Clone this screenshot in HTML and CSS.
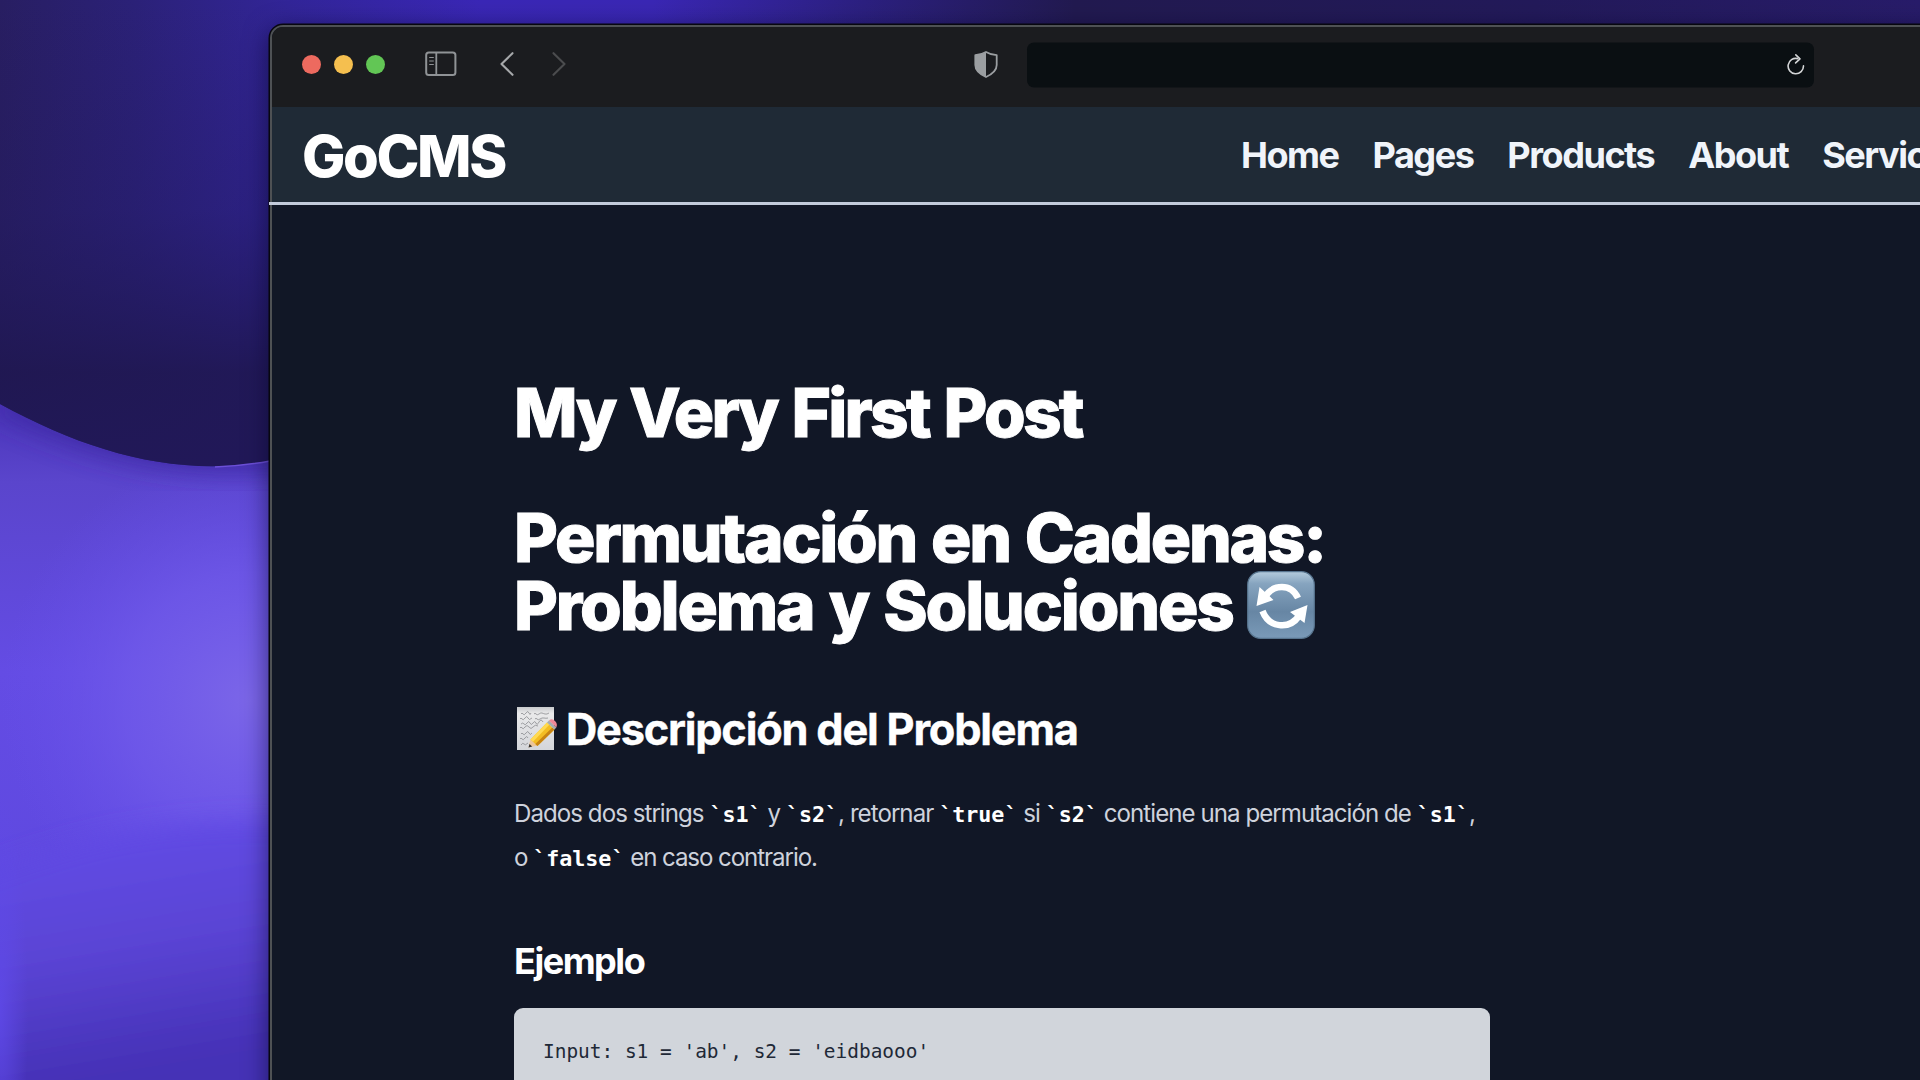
FILE: index.html
```html
<!DOCTYPE html>
<html lang="es">
<head>
<meta charset="utf-8">
<title>GoCMS</title>
<link rel="stylesheet" href="styles.css">
</head>
<body>
<div class="desktop">
  <svg class="wallpaper" viewBox="0 0 1920 1080" aria-hidden="true">
    <defs>
      <linearGradient id="base" x1="0" y1="400" x2="0" y2="1080" gradientUnits="userSpaceOnUse">
        <stop offset="0" stop-color="#4a34b8"/><stop offset=".12" stop-color="#5a45cc"/><stop offset=".4" stop-color="#644ce4"/><stop offset=".68" stop-color="#5f49e0"/><stop offset="1" stop-color="#4330b4"/>
      </linearGradient>
      <radialGradient id="glow" cx="250" cy="700" r="250" gradientUnits="userSpaceOnUse">
        <stop offset="0" stop-color="#7b66e8"/><stop offset=".5" stop-color="#705aea" stop-opacity=".75"/><stop offset="1" stop-color="#6650ea" stop-opacity="0"/>
      </radialGradient>
      <linearGradient id="fold" x1="150" y1="820" x2="190" y2="1060" gradientUnits="userSpaceOnUse">
        <stop offset="0" stop-color="#614be6"/><stop offset=".5" stop-color="#5a44d4"/><stop offset="1" stop-color="#4531b6"/>
      </linearGradient>
      <radialGradient id="leftEdge" gradientTransform="translate(0 1010) scale(28 220)" cx="0" cy="0" r="1" gradientUnits="userSpaceOnUse">
        <stop offset="0" stop-color="#5f4aea" stop-opacity=".8"/><stop offset="1" stop-color="#5f4aea" stop-opacity="0"/>
      </radialGradient>
      <linearGradient id="discX" x1="0" y1="0" x2="1920" y2="0" gradientUnits="userSpaceOnUse">
        <stop offset="0" stop-color="#281e62"/><stop offset=".07" stop-color="#2b2178"/><stop offset=".15" stop-color="#322598"/><stop offset=".25" stop-color="#3a27b6"/><stop offset=".34" stop-color="#3a27b4"/><stop offset=".45" stop-color="#2c2080"/><stop offset=".56" stop-color="#221a50"/><stop offset=".8" stop-color="#231a5a"/><stop offset="1" stop-color="#281c6a"/>
      </linearGradient>
      <linearGradient id="discY" x1="0" y1="0" x2="0" y2="466" gradientUnits="userSpaceOnUse">
        <stop offset="0" stop-color="#20174f" stop-opacity="0"/><stop offset=".45" stop-color="#20185c" stop-opacity=".3"/><stop offset=".8" stop-color="#1f1750" stop-opacity=".88"/><stop offset="1" stop-color="#211858"/>
      </linearGradient>
      <filter id="soft" x="-20%" y="-20%" width="140%" height="140%"><feGaussianBlur stdDeviation="12"/></filter>
    </defs>
    <rect width="1920" height="1080" fill="url(#base)"/>
    <rect width="600" height="1080" fill="url(#glow)"/>
    <path d="M-60 890C50 850 130 815 330 822V1120H-60Z" fill="url(#fold)" filter="url(#soft)"/>
    <rect y="780" width="40" height="300" fill="url(#leftEdge)"/>
    <path d="M-10 412C90 460 180 484 290 472V400H-10Z" fill="#3a28a0" opacity=".7" filter="url(#soft)"/>
    <path d="M0 404C88 452 176 478 270 461H1920V0H0Z" fill="url(#discX)"/>
    <path d="M0 404C88 452 176 478 270 461H1920V0H0Z" fill="url(#discY)"/>
    <path d="M215 467Q243 466 270 461" fill="none" stroke="#6c50d8" stroke-width="1.5"/>
  </svg>

  <main class="window">
    <header class="toolbar">
      <div class="lights"><i class="light red"></i><i class="light yellow"></i><i class="light green"></i></div>
      <svg class="sidebar-icon" viewBox="0 0 32 26"><rect x="1.2" y="1.5" width="29.2" height="22.6" rx="2.6" fill="none" stroke="#909396" stroke-width="2"/><path d="M11.3 1.5v22.6" stroke="#909396" stroke-width="1.8"/><path d="M4.2 6.5h4.6M4.2 10h4.6M4.2 13.5h4.6" stroke="#909396" stroke-width="1.2"/></svg>
      <svg class="back-icon" viewBox="0 0 14 24"><path d="M12.5 1.2 1.5 12l11 10.8" fill="none" stroke="#a6a8aa" stroke-width="2.1" stroke-linecap="round" stroke-linejoin="round"/></svg>
      <svg class="forward-icon" viewBox="0 0 14 24"><path d="M1.5 1.2 12.5 12l-11 10.8" fill="none" stroke="#4b4c4e" stroke-width="2.1" stroke-linecap="round" stroke-linejoin="round"/></svg>
      <svg class="shield-icon" viewBox="0 0 24 28"><path d="M12 1.4C9 3.2 5.5 4.3 1.3 4.7V14.5C1.3 20 5.5 23.5 12 26.5 18.5 23.5 22.7 20 22.7 14.5V4.7C18.5 4.3 15 3.2 12 1.4Z" fill="none" stroke="#9b9ea1" stroke-width="1.8" stroke-linejoin="round"/><path d="M12 1.4C9 3.2 5.5 4.3 1.3 4.7V14.5C1.3 20 5.5 23.5 12 26.5Z" fill="#9b9ea1"/></svg>
      <div class="address">
        <svg class="reload-icon" viewBox="0 0 18 22"><path d="M10.6 5.1A7.7 7.7 0 1 0 16.5 12.4" fill="none" stroke="#d3d5d6" stroke-width="1.6" stroke-linecap="round"/><path d="M8.8 1.3 13 5.3 8.6 9.4" fill="none" stroke="#d3d5d6" stroke-width="1.6" stroke-linecap="round" stroke-linejoin="round"/></svg>
      </div>
    </header>
    <nav class="navbar">
      <a class="brand">GoCMS</a>
      <div class="links"><a>Home</a><a>Pages</a><a>Products</a><a>About</a><a>Services</a></div>
    </nav>
    <article class="post">
      <h1 class="title">My Very First Post</h1>
      <h1 class="heading"><span class="line-a">Permutación en Cadenas:</span><br><span class="line-b">Problema y Soluciones</span><svg class="cycle-emoji" viewBox="0 0 68 68"><defs><linearGradient id="tile" x1="0" y1="0" x2="0" y2="1"><stop offset="0" stop-color="#b4cbdc"/><stop offset=".18" stop-color="#86a4bf"/><stop offset=".6" stop-color="#6786a4"/><stop offset="1" stop-color="#7a9ab8"/></linearGradient></defs><rect x=".7" y=".7" width="66.6" height="66.6" rx="13" fill="url(#tile)" stroke="#58758f" stroke-width="1.2"/><g fill="none" stroke="#fff" stroke-width="6.5"><path d="M18 26C26 13 44 12 51 27"/><path d="M15.5 40C22 57 42 59 52 45"/></g><path d="M12.5 16 9.5 35 26.5 29ZM43 41 60.5 34 57.5 52Z" fill="#fff"/></svg></h1>
      <h2 class="subheading"><svg class="memo-emoji" viewBox="0 0 42 46"><defs><linearGradient id="paper" x1="0" y1="0" x2="0" y2="1"><stop offset="0" stop-color="#c8cacc"/><stop offset=".15" stop-color="#e9e9ea"/><stop offset="1" stop-color="#d4d6da"/></linearGradient></defs><path d="M1 1H38V44H1Z" fill="url(#paper)"/><g fill="none" stroke="#8b8d90" stroke-width=".8"><path d="M5 8q1-2 2 0t3-1 3 0 2 0M18 8q1-1.5 2 0t3 0 3-1 3 1 4-1"/><path d="M4 13q1-2 2 0t3-1 3 0 4 0M19 13q1-1.5 2 0t3 0 4-1 4 0"/><path d="M5 18q2-2 3 0t3-1 3 0 3 0 3 0 3-1 4 0"/><path d="M4 22q1-2 2 0t3-1 4 0 4 0 5-1"/><path d="M5 28q1-2 2 0t3-1 3 0 3 0"/><path d="M4 33q1-2 2 0t3-1 3 0M5 39q2-3 3-1t4-1"/></g><path d="M12.5 41.5 14.5 33 21.5 39.5Z" fill="#ecc59a"/><path d="M12.5 41.5 13.5 38 16.2 40.5Z" fill="#333"/><path d="M14.5 33.5 31 16.5 38.5 23.5 21.5 40Z" fill="#f3bd22"/><path d="M14.5 33.5 31 16.5 33.3 18.7 17 35.7Z" fill="#ffda51"/><path d="M19.3 38 36.3 21.4 38.5 23.5 21.5 40Z" fill="#c88412"/><path d="M31 16.5 33 14.5 40.3 21.5 38.5 23.5Z" fill="#a7acb0"/><path d="M33 14.5Q36 12 39 15T40.3 21.5Z" fill="#ee8796"/></svg><span>Descripción del Problema</span></h2>
      <p class="text">Dados dos strings <code>`s1`</code> y <code>`s2`</code>, retornar <code>`true`</code> si <code>`s2`</code> contiene una permutación de <code>`s1`</code>,<br><span class="line-end">o <code>`false`</code> en caso contrario.</span></p>
      <h3 class="example">Ejemplo</h3>
      <pre class="code-block">Input: s1 = 'ab', s2 = 'eidbaooo'</pre>
    </article>
  </main>
</div>
</body>
</html>
```

FILE: styles.css
```css
* { box-sizing: border-box; }
html, body { margin: 0; height: 100%; overflow: hidden; background: #22195c; }
.desktop {
  position: relative;
  width: 1920px;
  height: 1080px;
  padding: 25px 0 0 270px;
  overflow: hidden;
  font-family: Inter, "Liberation Sans", sans-serif;
}
/* full-screen artwork behind the window */
.wallpaper { position: absolute; inset: 0; width: 1920px; height: 1080px; }
.window {
  position: relative;
  width: 1900px;
  height: 1200px;
  border: 2px solid #4e5154;
  border-radius: 13px;
  background: #111726;
  box-shadow: 0 0 0 1.5px #07070f, 0 6px 26px rgba(8, 4, 40, .65);
}
.toolbar {
  display: flex;
  align-items: center;
  height: 80px;
  padding: 0 0 6px 30px;
  border-radius: 11px 11px 0 0;
  background: #1b1c1f;
}
.toolbar svg { display: block; flex: none; }
.lights { display: flex; gap: 12.8px; }
.light { width: 19px; height: 19px; border-radius: 50%; }
.red { background: #ed6a5f; }
.yellow { background: #f5bf4f; }
.green { background: #62c655; }
.sidebar-icon { width: 32px; height: 26px; margin-left: 40.4px; }
.back-icon { width: 14px; height: 24px; margin-left: 43.4px; }
.forward-icon { width: 14px; height: 24px; margin-left: 38px; }
.shield-icon { width: 24px; height: 28px; margin-left: 408px; }
.address {
  display: flex;
  justify-content: flex-end;
  align-items: center;
  width: 787px;
  height: 45px;
  margin-left: 29px;
  padding-right: 9.5px;
  border-radius: 7px;
  background: #0a0f12;
}
.address, .shield-icon { transform: translateY(.5px); }
.reload-icon { width: 18px; height: 22px; }
.navbar {
  display: flex;
  align-items: center;
  height: 98px;
  margin-left: -3px;
  padding: 1px 0 0 33px;
  border-bottom: 3px solid #c3cbdb;
  background: linear-gradient(90deg, #07070f 1px, #4e5154 1px 3px, #1f2a36 3px);
  color: #fff;
}
.brand { width: 939px; padding-top: 1px; font-size: 57.8px; font-weight: 800; letter-spacing: -2.4px; }
.links { display: flex; gap: 34px; font-size: 36.1px; font-weight: 700; letter-spacing: -1.5px; color: #f0f4fa; }
.post { width: 976px; margin-left: 242px; padding-top: 174px; color: #fff; }
.post h1, .post h2, .post h3 { margin: 0; white-space: nowrap; }
.post h1 {
  font-size: 67.4px;
  line-height: 67.4px;
  font-weight: 800;
  letter-spacing: -2.75px;
  word-spacing: 2.5px;
  -webkit-text-stroke: 1px #fff;
}
.post .heading { margin-top: 58px; }
.heading .line-a { letter-spacing: -2.27px; }
.heading .line-b { letter-spacing: -2.15px; }
.cycle-emoji { width: 68px; height: 68px; margin: -10px 0 -10px 14px; vertical-align: 1px; }
.post .subheading {
  display: flex;
  align-items: center;
  height: 48px;
  margin-top: 66px;
  font-size: 43.3px;
  font-weight: 700;
  letter-spacing: -1.2px;
  -webkit-text-stroke: .4px #fff;
}
.memo-emoji { width: 42px; height: 46px; margin: 0 8px 0 2px; }
.text { margin: 39px 0 0; font-size: 24.1px; line-height: 43.3px; letter-spacing: -.96px; color: #ced2dc; white-space: nowrap; }
.line-end { letter-spacing: -1.08px; }
.text code { font: 700 21.7px "DejaVu Sans Mono", monospace; letter-spacing: 0; color: #fff; }
.post .example { margin-top: 58px; font-size: 36.1px; line-height: 48px; font-weight: 700; letter-spacing: -1.5px; }
.code-block {
  margin: 23.5px 0 0;
  padding: 25px 29px;
  height: 200px;
  border-radius: 9px;
  background: #d1d5db;
  color: #1f2937;
  font: 19.46px/38px "DejaVu Sans Mono", monospace;
}
```
